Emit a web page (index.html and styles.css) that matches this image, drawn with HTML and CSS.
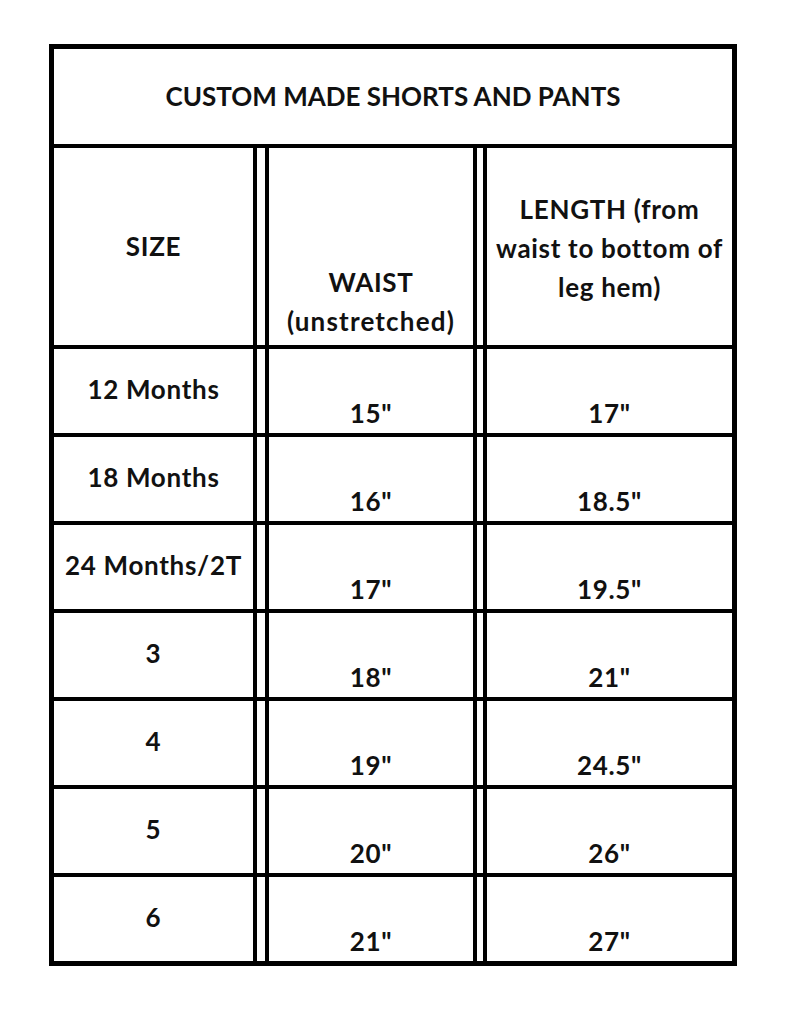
FILE: index.html
```html
<!DOCTYPE html>
<html lang="en">
<head>
<meta charset="utf-8">
<title>Custom Made Shorts and Pants</title>
<link rel="stylesheet" href="styles.css">
</head>
<body>
<div class="chart">
  <div class="title">CUSTOM MADE SHORTS AND PANTS</div>
  <div class="row head">
    <div class="cell c1 mid">SIZE</div>
    <div class="cell c2 low">WAIST<br><span class="wide">(unstretched)</span></div>
    <div class="cell c3 mid shift">LENGTH (from<br>waist to bottom of<br>leg hem)</div>
  </div>
  <div class="row data">
    <div class="cell c1 mid">12 Months</div>
    <div class="cell c2 low">15"</div>
    <div class="cell c3 low">17"</div>
  </div>
  <div class="row data">
    <div class="cell c1 mid">18 Months</div>
    <div class="cell c2 low">16"</div>
    <div class="cell c3 low">18.5"</div>
  </div>
  <div class="row data">
    <div class="cell c1 mid">24 Months/2T</div>
    <div class="cell c2 low">17"</div>
    <div class="cell c3 low">19.5"</div>
  </div>
  <div class="row data">
    <div class="cell c1 mid">3</div>
    <div class="cell c2 low">18"</div>
    <div class="cell c3 low">21"</div>
  </div>
  <div class="row data">
    <div class="cell c1 mid">4</div>
    <div class="cell c2 low">19"</div>
    <div class="cell c3 low">24.5"</div>
  </div>
  <div class="row data">
    <div class="cell c1 mid">5</div>
    <div class="cell c2 low">20"</div>
    <div class="cell c3 low">26"</div>
  </div>
  <div class="row data">
    <div class="cell c1 mid">6</div>
    <div class="cell c2 low">21"</div>
    <div class="cell c3 low">27"</div>
  </div>
</div>
</body>
</html>
```
FILE: styles.css
```css
html, body {
  margin: 0;
  padding: 0;
  background: #ffffff;
}

.chart {
  box-sizing: border-box;
  width: 688px;
  margin: 44px 0 0 49px;
  border: 5px solid #000;
  font-family: Lato, "Liberation Sans", sans-serif;
  font-weight: 700;
  font-size: 26px;
  line-height: 39px;
  color: #111;
}

.title {
  height: 95px;
  border-bottom: 4px solid #000;
  display: flex;
  align-items: center;
  justify-content: center;
}

.row {
  display: flex;
  border-bottom: 4px solid #000;
}

.row:last-child {
  border-bottom: 0;
}

.head {
  height: 197px;
}

.data {
  height: 84px;
}

.cell {
  box-sizing: border-box;
  display: flex;
  flex-direction: column;
  align-items: center;
  text-align: center;
  white-space: nowrap;
  letter-spacing: 0.7px;
}

.wide {
  letter-spacing: 1.2px;
}

.c1 {
  width: 203px;
  margin-right: 8px;
  border-right: 4px solid #000;
}

.c2 {
  width: 212px;
  margin-right: 6px;
  border-left: 4px solid #000;
  border-right: 4px solid #000;
}

.c3 {
  flex: 1;
  border-left: 4px solid #000;
}

.mid {
  justify-content: center;
}

.low {
  justify-content: flex-end;
}

.data .c1 {
  padding-bottom: 4px;
}

.head .c2 {
  padding-bottom: 4px;
}

.head .shift {
  padding-top: 4px;
}
```
